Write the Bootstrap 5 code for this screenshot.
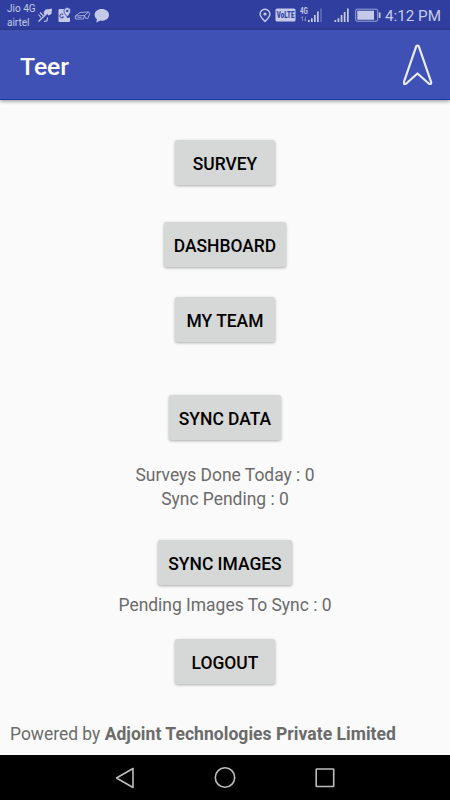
<!DOCTYPE html>
<html lang="en">
<head>
<meta charset="utf-8">
<meta name="viewport" content="width=device-width, initial-scale=1">
<title>Teer</title>
<link href="https://cdn.jsdelivr.net/npm/bootstrap@5.3.0/dist/css/bootstrap.min.css" rel="stylesheet">
<style>
body { font-family: Roboto, "Liberation Sans", sans-serif; background: #fafafa; color: #6b6b6b; font-size: 17.45px; line-height: 24px; }
.screen { width: 450px; height: 800px; }
.status { height: 30px; background: #303f9f; color: #c5cae9; }
.status svg { display: block; flex: none; }
.carrier { width: 37px; padding: 2px 0 0 7px; font-size: 10px; line-height: 13.5px; white-space: nowrap; }
.clock { width: 65px; font-size: 15.2px; line-height: 32px; white-space: nowrap; }
.appbar { height: 70px; background: #3f51b5; border-bottom: 1px solid #1a36ae; box-shadow: 0 1px 4px rgba(0,0,0,.45); padding: 0 17px 0 20px; }
.title { font-size: 24.7px; font-weight: 500; line-height: 30px; padding-top: 4px; }
.action { --bs-btn-bg: #d6d7d7; --bs-btn-color: #000; --bs-btn-hover-bg: #c9caca; --bs-btn-hover-color: #000; --bs-btn-border-width: 0; --bs-btn-border-radius: 2.5px; --bs-btn-padding-x: 10px; --bs-btn-padding-y: 0; --bs-btn-font-size: 17.45px; --bs-btn-font-weight: 500; height: 45px; min-width: 100px; padding-top: 3px; box-shadow: 0 1px 3px rgba(0,0,0,.32); text-transform: uppercase; }
.menu { padding-top: 40px; }
.gap-a { margin-top: 37px; } .gap-b { margin-top: 30px; } .gap-c { margin-top: 53px; }
.counts { margin-top: 23px; } .gap-d { margin-top: 29px; } .pending { margin-top: 8px; } .gap-e { margin-top: 22px; }
.credit { padding: 0 10px 9px; }
.credit b { font-size: 17.55px; letter-spacing: .035px; }
.softkeys { height: 45px; padding: 0 114px; }
</style>
<script src="https://cdn.jsdelivr.net/npm/bootstrap@5.3.0/dist/js/bootstrap.bundle.min.js"></script>
</head>
<body>
<div class="screen d-flex flex-column overflow-hidden">
  <div class="status d-flex flex-shrink-0">
    <div class="carrier">Jio 4G<br>airtel</div>
    <svg width="74" height="30" viewBox="37 0 74 30" fill="none" stroke="#c5cae9">
      <!-- satellite -->
      <path d="M38.500 21.500 51.500 9" stroke-width="1.3"/>
      <path d="M45.500 9.500 52 8.800 51.500 14 48.500 15.500 47 13.500 44.500 15 43.500 12.500Z" fill="#c5cae9" stroke="none"/>
      <path d="M38.500 14.500l2.500 3M40 12.500l3.500 3.500M44 21.500l3-.8.500-3.200" stroke-width="1.1"/>
      <!-- map -->
      <path d="M59.500 9H65l2 9 3-.5V21q0 1-1 1h-9.500q-1 0-1-1V10q0-1 1-1Z" fill="#c5cae9" stroke="none"/>
      <path d="M63.300 14.500a2 2 0 1 0 .2 2.600h-1.500" stroke="#303f9f" stroke-width="1"/>
      <path d="M67.300 7.500a3.400 3.400 0 0 1 3.400 3.400c0 2.200-3.400 6-3.400 6s-3.400-3.800-3.400-6a3.400 3.400 0 0 1 3.400-3.400Z" fill="#c5cae9" stroke="#303f9f" stroke-width=".8"/>
      <circle cx="67.300" cy="10.900" r="1.200" fill="#303f9f" stroke="none"/>
      <!-- car -->
      <path d="M75.300 16 80 12.500 88.500 12 89.800 13.500 88 18.300H85.500L84.500 15.500 75.300 16 75.500 19H83.500L84.500 15.500 88.500 12M77.500 17.300h4" stroke-width="1" opacity=".75"/>
      <!-- chat bubble -->
      <path d="M101.800 9c4.100 0 7.200 2.600 7.200 5.900s-3.100 5.800-7.200 5.800l-1.300-.1-4.300 1.900.8-3.300c-1.500-1.100-2.400-2.600-2.400-4.300 0-3.300 3.100-5.900 7.200-5.900Z" fill="#c5cae9" stroke="none"/>
    </svg>
    <svg class="ms-auto" width="127" height="30" viewBox="258 0 127 30" fill="#c5cae9">
      <path d="M265 9.200a4.900 4.900 0 0 1 4.900 4.900c0 3-4.900 7.300-4.900 7.300s-4.900-4.300-4.900-7.300a4.900 4.900 0 0 1 4.900-4.900Z" fill="none" stroke="#c5cae9" stroke-width="1.400"/>
      <circle cx="265" cy="14" r="1.600"/>
      <rect x="275.500" y="8.500" width="20" height="13" rx="1.500"/>
      <text transform="translate(276.800 18.300) scale(.69 1)" font-size="9" font-weight="900" fill="#303f9f">VoLTE</text>
      <text transform="translate(300 14) scale(.74 1)" font-size="8.500" font-weight="700">4G</text>
      <path d="M302.500 21v-4.500l-1.500 1.800M305.500 16.500V21l-1.500-2" fill="none" stroke="#c5cae9" stroke-width="1" opacity=".45"/>
      <path d="M308 20h1.700v2H308zM311 18.200h1.700V22H311zM314 15h1.700v7H314zM317 11.500h1.700V22H317z"/>
      <path d="M320.200 8.500h1.500V22h-1.500z" opacity=".35"/>
      <path d="M334.500 20h1.700v2h-1.700zM337.600 18.200h1.700V22h-1.700zM340.700 15h1.700v7h-1.700zM343.800 12h1.700v10h-1.700zM347 8.500h1.700V22H347z"/>
      <rect x="355.700" y="9.200" width="22" height="12" rx="1.500" fill="none" stroke="#c5cae9" stroke-width="1" opacity=".75"/>
      <path d="M357.300 10.700H374v9h-16.700zM378.800 12.500h1.700v5.500h-1.700z"/>
    </svg>
    <div class="clock">4:12 PM</div>
  </div>
  <header class="appbar d-flex flex-shrink-0 align-items-center justify-content-between text-white">
    <div class="title">Teer</div>
    <svg width="30" height="42" viewBox="403 44 30 42" fill="none" stroke="#e9ebf7" stroke-width="2.200" stroke-linejoin="round"><path d="M416.300 46.200q1.200-1.400 2.400 0L431 81.600q.8 3-2 2.200L417.500 73.500 406 83.800q-2.800.8-2-2.200Z"/></svg>
  </header>
  <main class="menu d-flex flex-column align-items-center flex-grow-1 text-center">
    <button class="btn action" type="button">Survey</button>
    <button class="btn action gap-a" type="button">Dashboard</button>
    <button class="btn action gap-b" type="button">My Team</button>
    <button class="btn action gap-c" type="button">Sync Data</button>
    <div class="counts">Surveys Done Today : 0<br>Sync Pending : 0</div>
    <button class="btn action gap-d" type="button">Sync Images</button>
    <div class="pending">Pending Images To Sync : 0</div>
    <button class="btn action gap-e" type="button">Logout</button>
  </main>
  <footer class="credit">Powered by <b>Adjoint Technologies Private Limited</b></footer>
  <nav class="softkeys bg-black d-flex flex-shrink-0 align-items-center justify-content-between">
    <svg width="22" height="24" fill="none" stroke="#bdbdbd" stroke-width="1.600" stroke-linejoin="round"><path d="M19 2.500v19L2.500 12Z"/></svg>
    <svg width="22" height="24" fill="none" stroke="#bdbdbd" stroke-width="1.600"><circle cx="11" cy="11.500" r="9.700"/></svg>
    <svg width="22" height="24" fill="none" stroke="#bdbdbd" stroke-width="1.600"><rect x="2.200" y="3" width="17.500" height="17.500" rx=".6"/></svg>
  </nav>
</div>
</body>
</html>
